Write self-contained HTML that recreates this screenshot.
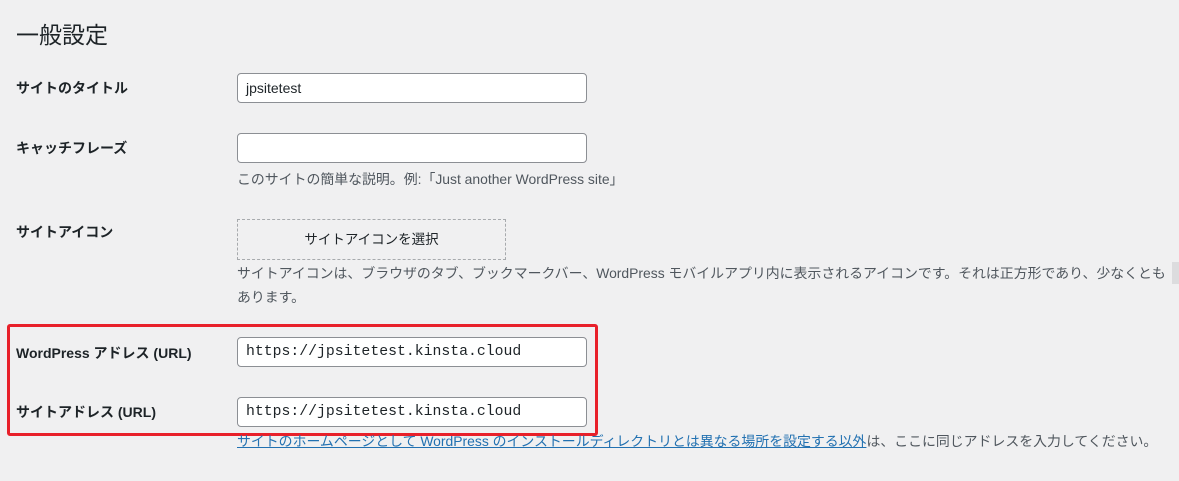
<!DOCTYPE html>
<html><head><meta charset="utf-8"><style>
body{margin:0;width:1179px;height:481px;background:#f0f0f1;overflow:hidden;position:relative;font-family:"Liberation Sans","Noto Sans CJK JP",sans-serif;color:#1d2327;font-size:14px}
.a{position:absolute;white-space:nowrap}
.lbl{font-weight:bold;font-size:14px}
.in{position:absolute;left:237px;width:348px;height:28px;background:#fff;border:1px solid #8c8f94;border-radius:4px;line-height:28px;padding-left:8px;box-sizing:content-box;font-size:14px}
.mono{font-family:"Liberation Mono",monospace;font-size:14.8px}
.d{color:#50575e;font-size:13.9px}
</style></head><body>
<div class="a" style="left:16px;top:16px;font-size:23px;">一般設定</div>
<div class="a lbl" style="left:16px;top:78px">サイトのタイトル</div>
<div class="in" style="top:73px;width:340px">jpsitetest</div>
<div class="a lbl" style="left:16px;top:138px">キャッチフレーズ</div>
<div class="in" style="top:133px;width:340px"></div>
<div class="a d" style="left:237px;top:169px">このサイトの簡単な説明。例:「Just another WordPress site」</div>
<div class="a lbl" style="left:16px;top:222px">サイトアイコン</div>
<div class="a" style="left:237px;top:219px;width:267px;height:39px;border:1px dashed #a7aaad;text-align:center;line-height:39px;font-size:13.5px">サイトアイコンを選択</div>
<div class="a d" style="left:237px;top:263px">サイトアイコンは、ブラウザのタブ、ブックマークバー、WordPress モバイルアプリ内に表示されるアイコンです。それは正方形であり、少なくとも</div>
<div class="a" style="left:1172px;top:262px;width:12px;height:22px;background:#dcdcde"></div>
<div class="a d" style="left:237px;top:287px">あります。</div>
<div class="a" style="left:7px;top:324px;width:585px;height:106px;border:3px solid #e8202a;border-radius:3px"></div>
<div class="a lbl" style="left:16px;top:343px">WordPress アドレス (URL)</div>
<div class="in mono" style="top:337px;width:340px">https://jpsitetest.kinsta.cloud</div>
<div class="a lbl" style="left:16px;top:402px">サイトアドレス (URL)</div>
<div class="in mono" style="top:397px;width:340px">https://jpsitetest.kinsta.cloud</div>
<div class="a d" style="left:237px;top:431px"><span style="color:#2271b1;text-decoration:underline">サイトのホームページとして WordPress のインストールディレクトリとは異なる場所を設定する以外</span>は、ここに同じアドレスを入力してください。</div>
</body></html>
